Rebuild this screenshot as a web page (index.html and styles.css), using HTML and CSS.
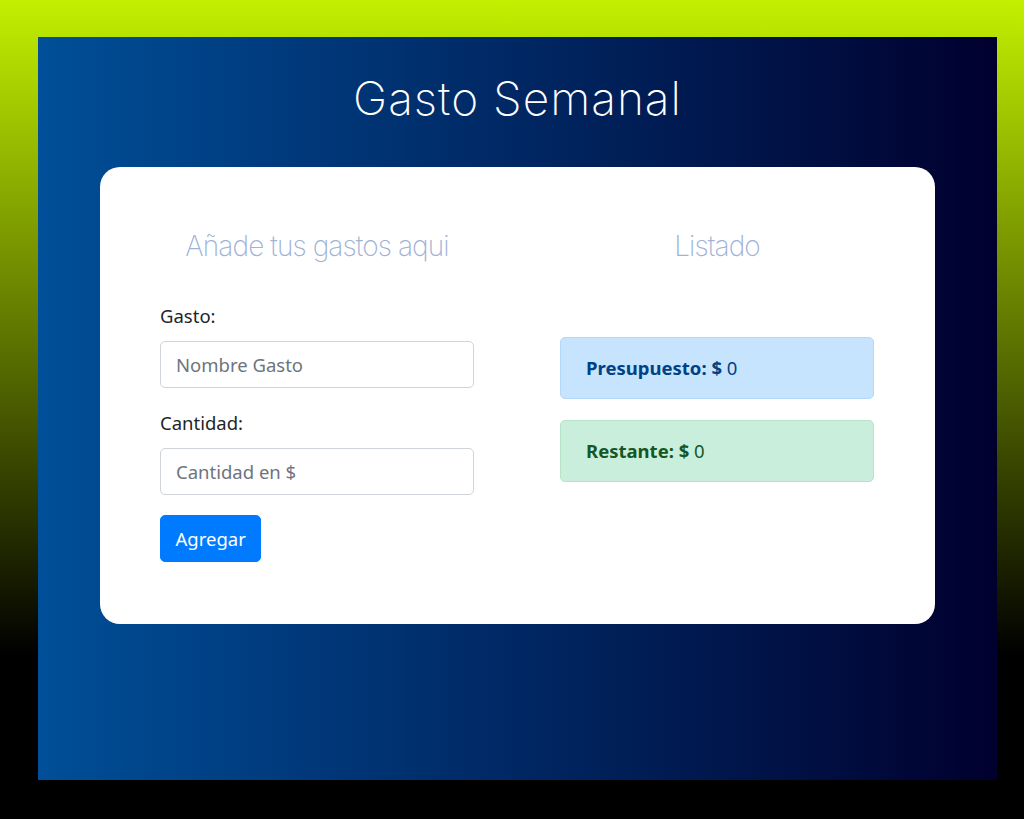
FILE: index.html
```html
<!DOCTYPE html>
<html lang="es">
<head>
<meta charset="utf-8">
<title>Gasto Semanal</title>
<link rel="stylesheet" href="styles.css">
</head>
<body>
<div class="app">
  <h1 class="title">Gasto Semanal</h1>
  <div class="card">
    <div class="col">
      <h2 class="heading">Añade tus gastos aqui</h2>
      <form class="form">
        <div class="group">
          <label class="label">Gasto:</label>
          <input class="input" type="text" placeholder="Nombre Gasto">
        </div>
        <div class="group">
          <label class="label">Cantidad:</label>
          <input class="input" type="text" placeholder="Cantidad en $">
        </div>
        <button class="btn" type="button">Agregar</button>
      </form>
    </div>
    <div class="col">
      <h2 class="heading">Listado</h2>
      <div class="list">
        <div class="alert alert-primary"><strong>Presupuesto: $</strong> 0</div>
        <div class="alert alert-success"><strong>Restante: $</strong> 0</div>
      </div>
    </div>
  </div>
</div>
</body>
</html>
```
FILE: styles.css
```css
html, body {
  margin: 0;
  height: 100%;
}
body {
  box-sizing: border-box;
  height: 819px;
  padding: 37px 27px 39px 38px;
  background: linear-gradient(to bottom, #c2f000 0%, #000000 80%, #000000 100%);
  font-family: "Noto Sans", "Open Sans", sans-serif;
  font-size: 18.5px;
  line-height: 30px;
  color: #212529;
}
.app {
  height: 743px;
  background: linear-gradient(to right, #004f98 0%, #00002e 100%);
  padding: 0 62px;
  box-sizing: border-box;
  overflow: hidden;
}
.title {
  margin: 33px 0 41px;
  text-align: center;
  font-family: Inter, Lato, sans-serif;
  font-weight: 200;
  font-size: 46px;
  letter-spacing: 1px;
  line-height: 56px;
  color: #ffffff;
}
.card {
  background: #ffffff;
  border-radius: 20px;
  padding: 60px 61px 62px 60px;
  display: grid;
  grid-template-columns: 1fr 1fr;
  column-gap: 86px;
}
.heading {
  margin: 0;
  text-align: center;
  font-family: Inter, Lato, sans-serif;
  font-weight: 200;
  font-size: 28px;
  letter-spacing: -0.9px;
  line-height: 38px;
  color: #9fb3d6;
}
.form {
  margin-top: 36px;
}
.group {
  margin-bottom: 20px;
}
.label {
  display: block;
  margin-bottom: 10px;
}
.input {
  display: block;
  width: 100%;
  box-sizing: border-box;
  height: 47px;
  padding: 7px 15px;
  border: 1px solid #ced4da;
  border-radius: 5px;
  font-family: inherit;
  font-size: 18.5px;
  color: #495057;
}
.input::placeholder {
  color: #6c757d;
}
.btn {
  display: inline-block;
  height: 47px;
  padding: 0 14.5px;
  border: 1px solid #007bff;
  border-radius: 5px;
  background: #007bff;
  color: #ffffff;
  font-family: inherit;
  font-size: 18.5px;
}
.list {
  margin-top: 72px;
}
.alert {
  padding: 15px 25px;
  border: 1px solid transparent;
  border-radius: 5px;
  margin-bottom: 21px;
}
.alert strong {
  font-weight: 700;
}
.alert-primary {
  background: #c6e4fd;
  border-color: #b3d8fb;
  color: #004085;
}
.alert-success {
  background: #c9eedb;
  border-color: #b7e3c8;
  color: #155724;
}
```
